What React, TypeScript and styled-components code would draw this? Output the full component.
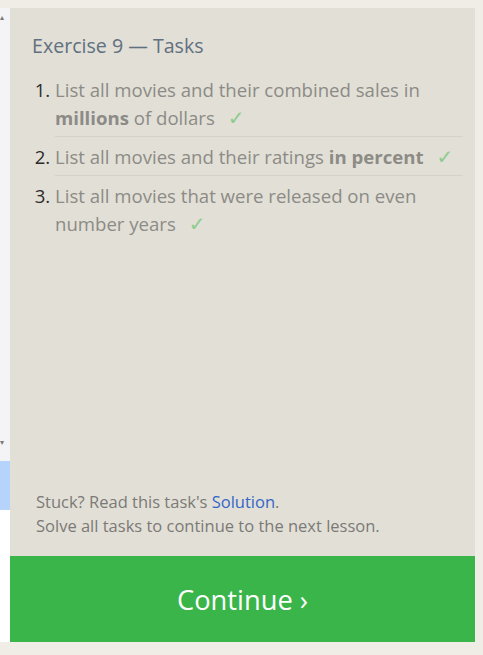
import React from "react";
import styled, { createGlobalStyle } from "styled-components";

const Global = createGlobalStyle`
  html, body { margin: 0; padding: 0; background: #efede6; }
  body { font-family: "Open Sans", "Noto Sans", sans-serif; }
`;

const Page = styled.div`
  display: flex;
  flex-direction: row;
  height: 655px;
  padding: 8px 8px 13px 0;
  box-sizing: border-box;
`;

const Rail = styled.div`
  width: 10px;
  display: flex;
  flex-direction: column;
  background: #f4f4f6;
`;

const RailArrow = styled.div<{ $top: number }>`
  height: 12px;
  margin-top: ${(p) => p.$top}px;
  display: flex;
  align-items: center;
  justify-content: flex-start;
  color: #7a7a7a;
  font-size: 8px;
  line-height: 1;
  font-family: "DejaVu Sans", sans-serif;
`;

const RailSpacer = styled.div`
  flex: 1;
`;

const RailSelected = styled.div`
  height: 49px;
  margin-top: 12px;
  background: #b5d3fb;
`;

const RailWhite = styled.div`
  height: 132px;
  background: #ffffff;
`;

const Panel = styled.div`
  width: 465px;
  display: flex;
  flex-direction: column;
  background: #e2dfd6;
`;

const Body = styled.div`
  flex: 1;
  padding: 26px 12px 0 22px;
`;

const Title = styled.h2`
  margin: 0;
  font-size: 19.6px;
  font-weight: 400;
  line-height: 24px;
  color: #617080;
`;

const List = styled.ol`
  margin: 12px 0 0 0;
  padding: 0 0 0 23px;
  color: #2c2c2c;
  font-size: 18.6px;
`;

const Item = styled.li`
  padding: 6px 0 4px 0;
  line-height: 28px;
  border-bottom: 1px solid #d5d2c8;
  &:last-child { border-bottom: none; }
  &::marker { color: #2c2c2c; }
`;

const TaskText = styled.span`
  color: #8c8b86;
`;

const Strong = styled.b`
  font-weight: 700;
`;

const Check = styled.span`
  display: inline-block;
  color: #8fcc90;
  margin-left: 13px;
  font-family: "DejaVu Sans", sans-serif;
  font-size: 20px;
  line-height: 1;
`;

const Footer = styled.div`
  padding: 0 12px 18px 26px;
  font-size: 16.5px;
  line-height: 24px;
  color: #7b7a76;
`;

const Link = styled.a`
  color: #3367c8;
  text-decoration: none;
`;

const Button = styled.button`
  height: 86px;
  border: none;
  background: #39b54a;
  color: #ffffff;
  font-family: inherit;
  font-size: 27.3px;
  cursor: pointer;
`;

const tasks: React.ReactNode[] = [
  <>List all movies and their combined sales in <Strong>millions</Strong> of dollars</>,
  <>List all movies and their ratings <Strong>in percent</Strong></>,
  <>List all movies that were released on even number years</>,
];

export default function App() {
  return (
    <>
      <Global />
      <Page>
        <Rail>
          <RailArrow $top={4}>▴</RailArrow>
          <RailSpacer />
          <RailArrow $top={0}>▾</RailArrow>
          <RailSelected />
          <RailWhite />
        </Rail>
        <Panel>
          <Body>
            <Title>Exercise 9 — Tasks</Title>
            <List>
              {tasks.map((t, i) => (
                <Item key={i}>
                  <TaskText>{t}</TaskText>
                  <Check>✓</Check>
                </Item>
              ))}
            </List>
          </Body>
          <Footer>
            Stuck? Read this task's <Link href="#">Solution</Link>.
            <br />
            Solve all tasks to continue to the next lesson.
          </Footer>
          <Button>Continue ›</Button>
        </Panel>
      </Page>
    </>
  );
}
